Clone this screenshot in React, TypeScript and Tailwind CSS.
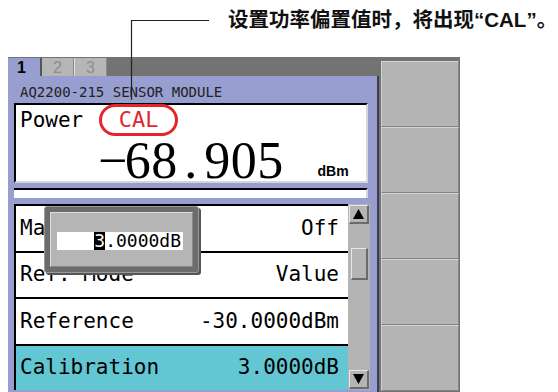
import React from 'react';

const mono = { fontFamily: '"DejaVu Sans Mono", "Liberation Mono", monospace' };

const rows = [
  { label: 'Max/Min', value: 'Off', active: false },
  { label: 'Ref. Mode', value: 'Value', active: false },
  { label: 'Reference', value: '-30.0000dBm', active: false },
  { label: 'Calibration', value: '3.0000dB', active: true },
];

const digits = ['\u2212', '6', '8', '.', '9', '0', '5'];

const ScrollButton = ({ up }: { up: boolean }) => (
  <div className="w-[20px] h-[19px] bg-[#b4b4b4] border-t border-l border-t-[#e6e6e6] border-l-[#e6e6e6] border-b-2 border-r-2 border-b-[#6a6a6a] border-r-[#6a6a6a] flex items-center justify-center">
    <svg width="11" height="10" viewBox="0 0 11 10">
      {up ? <polygon points="5.5,0 11,10 0,10" fill="#000" /> : <polygon points="0,0 11,0 5.5,10" fill="#000" />}
    </svg>
  </div>
);

export default function App() {
  return (
    <div className="relative w-[558px] h-[392px] overflow-hidden bg-white">
      {/* Caption */}
      <div className="h-[57px] pl-[228px] pt-[8px]">
        <span
          className="text-[20.5px] font-bold text-[#111] leading-[24px] whitespace-nowrap"
          style={{ fontFamily: '"Liberation Sans", "Noto Sans CJK SC", sans-serif' }}
        >
          设置功率偏置值时，将出现“CAL”。
        </span>
      </div>

      {/* Instrument screen */}
      <div className="flex ml-[8px] w-[452px] h-[335px] bg-[#737373]">
        <div className="w-[371px] flex flex-col">
          {/* Tabs */}
          <div className="flex h-[18px] mt-[1px] text-[16px] leading-none" style={{ fontFamily: '"Liberation Sans", sans-serif' }}>
            <div className="w-[32px] bg-[#989ed0] font-bold text-black flex items-center pl-[9px] pt-[2px]">1</div>
            <div className="w-[34px] bg-[#b6b6b6] border-l-2 border-l-[#555] border-r border-r-[#8a8a8a] text-[#8e8e8e] flex items-center justify-center pt-[2px]">2</div>
            <div className="w-[33px] bg-[#b6b6b6] border-l border-l-[#e0e0e0] border-r border-r-[#8a8a8a] text-[#8e8e8e] flex items-center justify-center pt-[2px]">3</div>
          </div>

          {/* Lavender panel */}
          <div className="flex-1 bg-[#989ed0] border-r-2 border-r-[#3d3d55] pl-[6px] pr-[7px] flex flex-col">
            <div className="h-[27px] pt-[9px] pl-[6px] text-[14px] leading-none text-[#222] whitespace-nowrap" style={mono}>
              AQ2200-215 SENSOR MODULE
            </div>

            {/* Power box */}
            <div className="w-[354px] h-[80px] bg-white border-t-2 border-l-2 border-t-black border-l-black border-b-2 border-r-2 border-b-[#d6d6d6] border-r-[#d6d6d6] flex flex-col">
              <div className="flex items-center h-[30px] pl-[4px]">
                <span className="text-[21px] leading-none text-black" style={mono}>Power</span>
                <span
                  className="ml-[16px] h-[32px] w-[79px] rounded-full border-[3px] border-[#e2262b] flex items-center justify-center text-[22px] leading-none text-[#e2262b]"
                  style={mono}
                >
                  CAL
                </span>
              </div>
              <div className="flex-1 flex items-end pl-[82px]">
                <span className="mb-[7px] text-[52px] leading-none text-black whitespace-nowrap" style={{ fontFamily: '"Liberation Serif", serif' }}>
                  {digits.map((d, i) => (
                    <span key={i} className="inline-block w-[26.5px] text-center">{d}</span>
                  ))}
                </span>
                <span className="ml-[34px] mb-[16px] text-[14px] font-bold leading-none text-black" style={{ fontFamily: '"Liberation Sans", sans-serif' }}>
                  dBm
                </span>
              </div>
            </div>

            {/* Bar */}
            <div className="mt-[5px] w-[354px] h-[10px] bg-white border-t-2 border-t-black border-r-2 border-r-[#d6d6d6]" />

            {/* List */}
            <div className="relative mt-[6px] h-[186px] flex">
              <div className="w-[334px] flex flex-col">
                {rows.map((r) => (
                  <div
                    key={r.label}
                    className={`flex-1 flex items-center justify-between border-t-2 border-l-2 border-black pl-[4px] pr-[9px] text-[21px] leading-none text-black ${r.active ? 'bg-[#62c7d3]' : 'bg-white'}`}
                    style={mono}
                  >
                    <span>{r.label}</span>
                    <span>{r.value}</span>
                  </div>
                ))}
              </div>
              <div className="w-[22px] bg-[#b4b4b4] flex flex-col items-start pl-[1px] pt-[1px] pb-[1px]">
                <ScrollButton up />
                <div className="mt-[24px] ml-[2px] w-[17px] h-[32px] bg-[#b4b4b4] border-t border-l border-t-[#e6e6e6] border-l-[#e6e6e6] border-b-2 border-r-2 border-b-[#6a6a6a] border-r-[#6a6a6a]" />
                <div className="flex-1" />
                <ScrollButton up={false} />
              </div>

              {/* Value dialog */}
              <div className="absolute left-[30px] top-[2px] w-[155px] h-[67px] bg-[#6c6c6c] border border-[#9a9a9a] rounded-[3px] p-[5px] shadow-[2px_2px_0_#555]">
                <div className="h-full bg-[#b5b5b5] border-t border-l border-t-[#dcdcdc] border-l-[#dcdcdc] border-b border-r border-b-[#888] border-r-[#888] pl-[6px] pt-[19px]">
                  <div className="w-[126px] h-[18px] bg-white flex items-center justify-end pr-[2px] text-[18px] leading-none text-black" style={mono}>
                    <span className="bg-black text-white">3</span>
                    <span>.0000dB</span>
                  </div>
                </div>
              </div>
            </div>
          </div>
        </div>

        {/* Soft keys */}
        <div className="ml-[2px] w-[78px] pt-[4px] flex flex-col">
          {[0, 1, 2, 3, 4].map((i) => (
            <div key={i} className="h-[66px] bg-[#b4b4b4] border-t border-l border-t-[#d2d2d2] border-l-[#d2d2d2] border-b border-r border-b-[#858585] border-r-[#858585]" />
          ))}
        </div>
      </div>

      {/* Leader line */}
      <svg className="absolute left-0 top-0 pointer-events-none" width="558" height="392">
        <polyline points="209,20.5 131.5,20.5 131.5,100" fill="none" stroke="#222" strokeWidth="1.2" />
      </svg>
    </div>
  );
}
